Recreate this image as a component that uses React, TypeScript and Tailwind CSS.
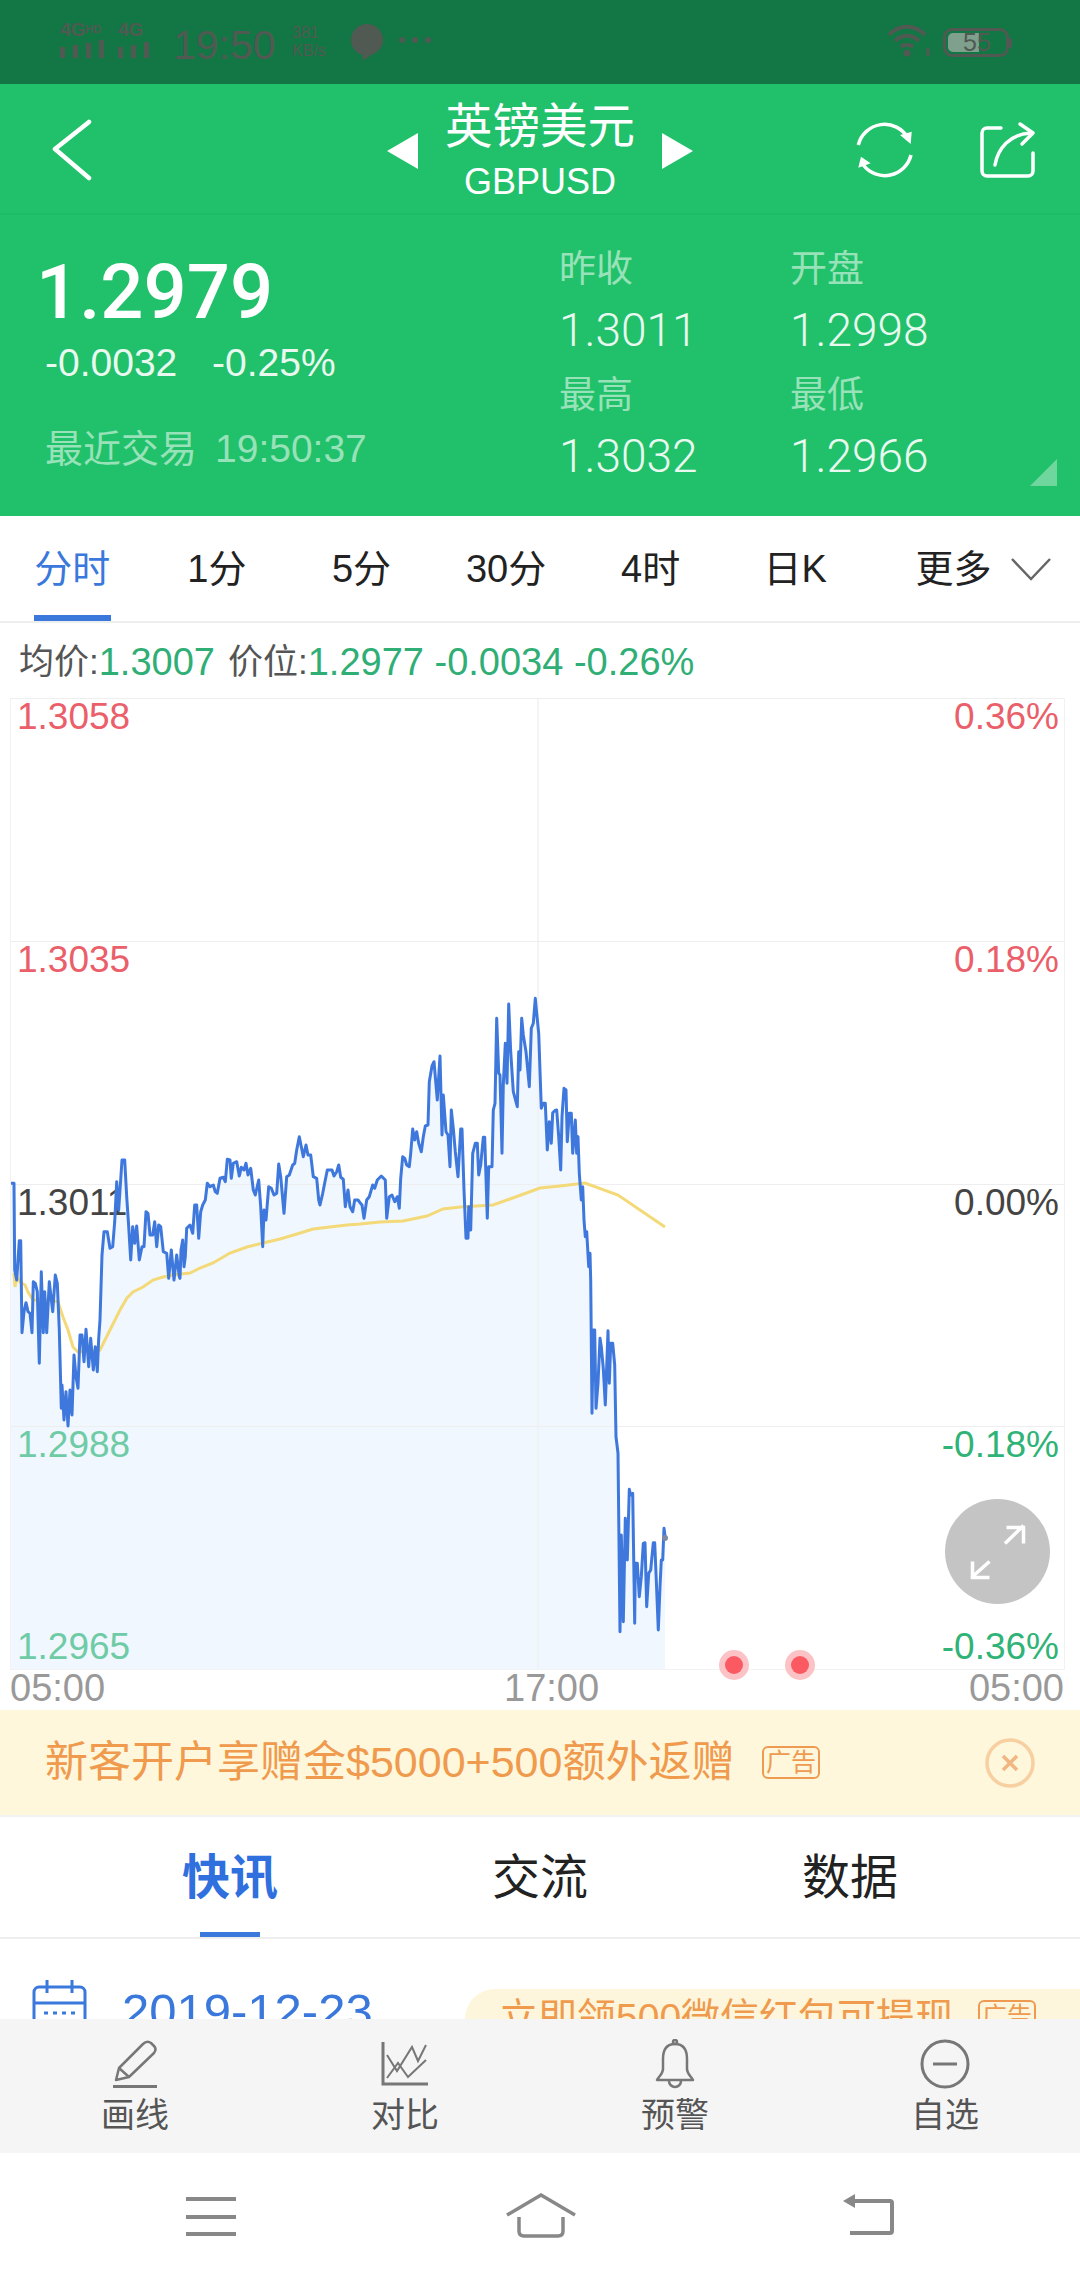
import React from 'react';

// chart traces, read off the reference in three pieces: [x, y] pairs
const seg1 = [33,190,42,190,44,450,50,480,58,362,62,362,66,638,72,575,78,548,84,575,90,580,96,638,100,485,106,490,112,515,118,730,124,455,130,638,134,515,140,638,148,485,158,575,166,465,172,490,178,630,184,865,186,795,192,900,198,815,204,918,210,810,216,885,222,705,228,770,234,805,240,645,246,645,252,725,258,628,266,740,272,655,280,750,286,680,292,755,296,655,300,600,306,405,312,335,322,335,330,385,338,380,344,305,350,185,356,270,366,120,374,120,380,230,386,320,392,420,398,320,404,370,410,318,418,420,426,380,432,380,438,275,444,280,450,345,458,345,464,305,470,380,476,315,482,320,490,395,500,400,506,475,514,390,522,480,530,405,538,470];
const seg2 = [0,565,3,480,8,450,12,530,16,500,20,415,30,405,38,430,44,345,50,345,56,445,62,365,68,345,76,330,82,280,90,290,100,285,106,305,112,310,120,265,130,262,136,275,142,208,150,210,154,265,160,220,170,215,178,258,184,232,192,240,198,220,204,255,212,235,220,300,226,315,236,270,242,350,248,470,252,360,258,390,266,290,274,295,282,315,290,310,296,222,302,260,312,370,320,260,328,255,338,225,344,220,350,180,358,140,364,170,370,200,378,165,384,195,392,195,400,260,410,265,416,330,420,345,428,310,436,270,442,240,456,240,462,258,470,245,476,225,482,262,490,268,496,350,504,300,510,350,518,365,524,330,534,330];
const seg3 = [0,668,6,675,12,715,20,660,28,650,38,615,44,625,52,600,64,588,76,600,80,715,88,650,96,645,104,665,112,650,118,685,122,595,128,530,134,535,140,555,148,560,152,520,158,447,164,480,170,455,176,490,184,515,190,470,196,438,204,435,208,305,216,258,222,245,232,360,240,228,246,465,250,345,258,455,264,465,270,560,274,390,280,445,286,515,294,590,302,447,306,447,312,630,318,775,324,775,326,680,332,750,338,520,346,490,352,490,356,585,362,555,370,472,374,472,382,715,386,560,396,560,400,390,405,370,410,115,416,280,420,285,426,520,430,315,436,190,441,310,446,72,452,215,460,335,472,380,476,215,480,270,485,115,490,165,498,215,508,320,514,145,520,130,526,55,530,100,536,160,544,385,550,370,556,370,562,510,568,425,574,490,578,398,584,392,590,390,596,470,602,570,606,410,612,325,618,330,622,485,628,400,634,400,638,520,646,420,650,520];
const seg4 = [48,60,54,50,58,160,64,240,68,200,72,300,76,350,80,335,86,440,90,400,92,480,96,880,100,630,104,630,108,865,114,790,120,655,124,680,130,745,136,855,144,632,148,790,152,670,158,670,164,735,168,950,174,1000,180,1535,184,1245,190,1505,196,1195,202,1320,208,1108,212,1125,218,1120,224,1510,226,1330,232,1330,238,1430,244,1370,250,1270,255,1268,260,1460,266,1360,272,1350,280,1268,284,1268,288,1360,295,1530,300,1400,304,1320,308,1320,312,1225,316,1255];

const toPoints = (pts: number[], ox: number, oy: number) => {
  const out: string[] = [];
  for (let i = 0; i < pts.length; i += 2) {
    out.push(`${(ox + pts[i] / 3).toFixed(1)},${(oy + pts[i + 1] / 3).toFixed(1)}`);
  }
  return out.join(' ');
};

const priceLine = [toPoints(seg1, 0, 1120), toPoints(seg2, 180, 1090), toPoints(seg3, 360, 980), toPoints(seg4, 560, 1120)].join(' ');
const areaShape = `11,1669 ${priceLine} 665,1669`;
const avgLine = '14,1273 15,1287 17,1277 20,1282 25,1285 28,1292 33,1300 50,1300 58,1302 63,1317 68,1330 73,1347 78,1352 100,1350 110,1330 120,1310 127,1298 133,1292 143,1287 153,1280 163,1277 173,1275 190,1273 200,1268 213,1263 230,1253 247,1247 263,1243 280,1239 297,1234 313,1229 330,1227 347,1225 360,1224 380,1222 403,1221 427,1216 443,1209 460,1207 493,1205 510,1199 540,1188 560,1186 585,1183 618,1195 665,1227';

const periods = [
  { label: '分时', active: true },
  { label: '1分' },
  { label: '5分' },
  { label: '30分' },
  { label: '4时' },
  { label: '日K' },
];

const AdTag = ({ className }: { className: string }) => (
  <span className={`inline-flex items-center justify-center w-[58px] h-[33px] border-2 border-[#ee9a50] rounded-[6px] text-[#ee9a50] text-[25px] leading-none ${className}`}>广告</span>
);

const StatusBar = () => (
  <div className="h-[84px] bg-[#127645] flex items-start text-[#505a52] shrink-0">
    <div className="ml-[60px] mt-[21px] w-[58px]">
      <div className="h-[17px] text-[19px] leading-[17px] font-bold whitespace-nowrap">4G<span className="text-[11px] align-top">HD</span></div>
      <div className="flex items-end gap-[8px] h-[19px] mt-[1px]">
        <div className="w-[5px] h-[11px] bg-[#505a52]" />
        <div className="w-[5px] h-[13px] bg-[#505a52]" />
        <div className="w-[5px] h-[15px] bg-[#505a52]" />
        <div className="w-[5px] h-[18px] bg-[#505a52]" />
      </div>
    </div>
    <div className="mt-[21px] w-[50px]">
      <div className="h-[17px] text-[19px] leading-[17px] font-bold">4G</div>
      <div className="flex items-end gap-[8px] h-[19px] mt-[1px]">
        <div className="w-[5px] h-[11px] bg-[#505a52]" />
        <div className="w-[5px] h-[13px] bg-[#505a52]" />
        <div className="w-[5px] h-[16px] bg-[#505a52]" />
      </div>
    </div>
    <div className="ml-[5px] mt-[23px] text-[41px] leading-[44px] w-[119px]">19:50</div>
    <div className="mt-[24px] text-[16px] leading-[18px] w-[50px]">381<br />KB/s</div>
    <svg width="36" height="40" viewBox="0 0 36 40" className="mt-[22px] ml-[7px]">
      <path d="M18 2C9 2 2 9 2 18c0 8 6 14 12 15l-1 5c4-1 7-3 9-5 7-2 12-8 12-15C34 9 27 2 18 2z" fill="#505a52" />
    </svg>
    <div className="flex gap-[7px] mt-[37px] ml-[14px]">
      <div className="w-[6px] h-[6px] rounded-full bg-[#505a52]" />
      <div className="w-[6px] h-[6px] rounded-full bg-[#505a52]" />
      <div className="w-[6px] h-[6px] rounded-full bg-[#505a52]" />
    </div>
    <svg width="44" height="34" viewBox="0 0 44 34" className="ml-[456px] mt-[24px]" fill="none" stroke="#505a52" strokeWidth="4">
      <path d="M2 11C12 0 28 0 38 11" />
      <path d="M8 17C15 10 25 10 32 17" />
      <path d="M14 23C17 20 23 20 26 23" />
      <circle cx="20" cy="29" r="3.5" fill="#505a52" stroke="none" />
      <path d="M41 24v8" strokeWidth="3" />
    </svg>
    <div className="ml-[12px] mt-[28px] w-[66px] h-[29px] border-[3px] border-[#505a52] rounded-[9px] p-[2px] relative flex">
      <div className="w-[31px] h-full bg-[#7fa08c] rounded-l-[5px]" />
      <span className="absolute left-[17px] top-[-1px] text-[25px] leading-[25px]">55</span>
    </div>
    <div className="w-[3px] h-[10px] bg-[#505a52] mt-[38px] rounded-r-[2px]" />
  </div>
);

const Header = () => (
  <div className="h-[131px] bg-[#21c06a] border-b-2 border-[#1bbd64] flex items-start text-white shrink-0">
    <svg width="40" height="62" viewBox="0 0 40 62" fill="none" stroke="white" strokeWidth="4.5" strokeLinecap="round" strokeLinejoin="round" className="ml-[52px] mt-[35px]">
      <path d="M37 3L3 30L37 59" />
    </svg>
    <svg width="32" height="36" viewBox="0 0 32 36" fill="white" className="ml-[295px] mt-[49px]">
      <path d="M31 0V36L0 18z" />
    </svg>
    <div className="w-[242px] flex flex-col items-center">
      <div className="h-[62px] text-[47.5px] leading-[62px] mt-[12px] whitespace-nowrap">英镑美元</div>
      <div className="h-[40px] text-[36px] leading-[40px] mt-[4px]">GBPUSD</div>
    </div>
    <svg width="32" height="36" viewBox="0 0 32 36" fill="white" className="mt-[49px]">
      <path d="M1 0V36L32 18z" />
    </svg>
    <svg width="64" height="64" viewBox="0 0 64 64" fill="none" stroke="white" strokeWidth="3.5" className="ml-[160px] mt-[34px]">
      <path d="M5.3 27A27 27 0 0 1 55 20" />
      <path d="M47 17L58.700 13.700 57.700 26z" fill="white" stroke="none" />
      <path d="M58 37A27 27 0 0 1 10.300 47" />
      <path d="M5.300 49.700L8 38.700 17.700 45.300z" fill="white" stroke="none" />
    </svg>
    <svg width="60" height="60" viewBox="0 0 60 60" fill="none" stroke="white" strokeWidth="3.500" strokeLinecap="round" strokeLinejoin="round" className="ml-[61px] mt-[36px]">
      <path d="M23 8H9a5 5 0 0 0-5 5v38a5 5 0 0 0 5 5h41a5 5 0 0 0 5-5V33" />
      <path d="M17 45C20 28 32 14 53 13" />
      <path d="M42 4L55 13 44 24" />
    </svg>
  </div>
);

const QuoteStat = ({ label, value }: { label: string; value: string }) => (
  <div>
    <div className="h-[40px] text-[37px] leading-[40px] text-[#97e2b8]">{label}</div>
    <div className="h-[50px] mt-[15px] text-[46px] leading-[50px] text-[#e9f9f0] font-['Roboto'] font-light">{value}</div>
  </div>
);

const Quote = () => (
  <div className="h-[301px] bg-[#21c06a] relative flex items-start shrink-0">
    <div className="w-[559px] pl-[36px] pt-[42px]">
      <div className="h-[70px] text-[76px] leading-[70px] text-white font-['Roboto'] font-medium">1.2979</div>
      <div className="h-[40px] mt-[16px] ml-[9px] text-[39px] leading-[40px] text-[#e9f9f0] flex">
        <span className="w-[167px]">-0.0032</span>
        <span>-0.25%</span>
      </div>
      <div className="h-[40px] mt-[46px] ml-[9px] text-[38px] leading-[40px] text-[#97e2b8] flex whitespace-nowrap">
        <span className="w-[170px]">最近交易</span>
        <span className="text-[39px]">19:50:37</span>
      </div>
    </div>
    <div className="grid grid-cols-[231px_1fr] content-start gap-y-[21px] pt-[35px]">
      <QuoteStat label="昨收" value="1.3011" />
      <QuoteStat label="开盘" value="1.2998" />
      <QuoteStat label="最高" value="1.3032" />
      <QuoteStat label="最低" value="1.2966" />
    </div>
    <svg width="28" height="28" viewBox="0 0 28 28" className="absolute left-[1030px] top-[244px]">
      <path d="M27 0V27H0z" fill="#6fd69e" />
    </svg>
  </div>
);

const PeriodTabs = () => (
  <div className="h-[107px] flex items-start border-b-2 border-[#eeeeee] shrink-0 text-[38px] text-[#222222]">
    {periods.map((p) => (
      <div key={p.label} className="w-[144.600px] h-[105px] flex flex-col items-center">
        <div className={`h-[46px] mt-[30px] leading-[46px] ${p.active ? 'text-[#3a78dc]' : ''}`}>{p.label}</div>
        {p.active && <div className="w-[77px] h-[6px] mt-[23px] bg-[#3a78dc]" />}
      </div>
    ))}
    <div className="flex items-start ml-[48px] mt-[30px]">
      <span className="leading-[46px] whitespace-nowrap">更多</span>
      <svg width="42" height="24" viewBox="0 0 42 24" fill="none" stroke="#666666" strokeWidth="2.500" className="ml-[18px] mt-[11px]">
        <path d="M2 2L21 22L40 2" />
      </svg>
    </div>
  </div>
);

const InfoRow = () => (
  <div className="h-[75px] pl-[19px] pt-[4px] flex items-center text-[35px] shrink-0 whitespace-nowrap">
    <span className="text-[#555555]">均价:</span>
    <span className="text-[#2fae75] text-[38px]">1.3007</span>
    <span className="text-[#555555] ml-[13px]">价位:</span>
    <span className="text-[#2fae75] text-[38px]">1.2977 -0.0034 -0.26%</span>
  </div>
);

const ChartLabels = ({ left, right, leftColor, rightColor }: { left: string; right: string; leftColor: string; rightColor: string }) => (
  <div className="flex justify-between h-[36px] leading-[36px] text-[37px]">
    <span className={leftColor}>{left}</span>
    <span className={rightColor}>{right}</span>
  </div>
);

const Chart = () => (
  <div className="relative h-[1012px] shrink-0">
    <svg width="1080" height="1012" viewBox="0 698 1080 1012" className="absolute left-0 top-0">
      <polygon points={areaShape} fill="#f0f7fe" />
      <path d="M538 698V1669" stroke="#f0f0f0" strokeWidth="1.500" />
    </svg>
    <div className="relative ml-[10px] w-[1055px] h-[972px] grid grid-rows-4 border-x border-b border-[#f2f2f2]">
      <div className="border-t border-[#eeeeee] pl-[6px] pr-[5px]">
        <ChartLabels left="1.3058" right="0.36%" leftColor="text-[#ea5f6a]" rightColor="text-[#ea5f6a]" />
      </div>
      <div className="border-t border-[#eeeeee] pl-[6px] pr-[5px]">
        <ChartLabels left="1.3035" right="0.18%" leftColor="text-[#ea5f6a]" rightColor="text-[#ea5f6a]" />
      </div>
      <div className="border-t border-[#eeeeee] pl-[6px] pr-[5px]">
        <ChartLabels left="1.3011" right="0.00%" leftColor="text-[#444444]" rightColor="text-[#444444]" />
      </div>
      <div className="border-t border-[#eeeeee] pl-[6px] pr-[5px] flex flex-col justify-between pb-[4px]">
        <ChartLabels left="1.2988" right="-0.18%" leftColor="text-[#6fcba6]" rightColor="text-[#2fb377]" />
        <ChartLabels left="1.2965" right="-0.36%" leftColor="text-[#6fcba6]" rightColor="text-[#2fb377]" />
      </div>
    </div>
    <div className="flex pl-[10px] pr-[16px] h-[36px] leading-[36px] text-[38px] text-[#999999]">
      <span className="w-[494px]">05:00</span>
      <span>17:00</span>
      <span className="ml-auto">05:00</span>
    </div>
    <svg width="1080" height="1012" viewBox="0 698 1080 1012" className="absolute left-0 top-0 pointer-events-none">
      <polyline points={avgLine} fill="none" stroke="#f3d977" strokeWidth="3" />
      <polyline points={priceLine} fill="none" stroke="#3f78dc" strokeWidth="3" strokeLinejoin="round" />
      <circle cx="665" cy="1538" r="3" fill="#7d8aa0" />
    </svg>
    <div className="absolute left-[719px] top-[952px] w-[30px] h-[30px] rounded-full bg-[#fcc3c6] flex items-center justify-center">
      <div className="w-[18px] h-[18px] rounded-full bg-[#fb5a63]" />
    </div>
    <div className="absolute left-[785px] top-[952px] w-[30px] h-[30px] rounded-full bg-[#fcc3c6] flex items-center justify-center">
      <div className="w-[18px] h-[18px] rounded-full bg-[#fb5a63]" />
    </div>
    <div className="absolute left-[945px] top-[801px] w-[105px] h-[105px] rounded-full bg-[#c4c4c4]">
      <svg width="105" height="105" viewBox="0 0 105 105" fill="none" stroke="white" strokeWidth="3.500">
        <path d="M78.500 26.500L60 44.500M61.500 28.500H78.500V44.500" />
        <path d="M26.500 78.500L44.500 62.500M27.500 62.500V78.500H44.500" />
      </svg>
    </div>
  </div>
);

const Banner = () => (
  <div className="h-[107px] bg-[#fef7dc] border-b-2 border-[#f3f3f3] flex items-center pl-[45px] shrink-0 text-[#ef9a4d] text-[43px] whitespace-nowrap">
    <span className="w-[717px]">新客开户享赠金$5000+500额外返赠</span>
    <AdTag className="" />
    <svg width="50" height="50" viewBox="0 0 50 50" fill="none" stroke="#f7cfa0" strokeWidth="3.500" className="ml-[165px]">
      <circle cx="25" cy="25" r="23" />
      <path d="M18 18L32 32M32 18L18 32" stroke="#f2b680" />
    </svg>
  </div>
);

const NewsTabs = () => (
  <div className="h-[122px] border-b-2 border-[#eeeeee] flex pl-[75px] shrink-0 text-[48px] text-[#222222]">
    <div className="w-[310px] flex flex-col items-center">
      <div className="mt-[30px] h-[62px] leading-[62px] font-bold text-[#2f6fde]">快讯</div>
      <div className="w-[60px] h-[5px] mt-[23px] bg-[#3a78dc]" />
    </div>
    <div className="w-[310px] flex justify-center"><div className="mt-[30px] h-[62px] leading-[62px]">交流</div></div>
    <div className="w-[310px] flex justify-center"><div className="mt-[30px] h-[62px] leading-[62px]">数据</div></div>
  </div>
);

const Feed = () => (
  <div className="h-[80px] overflow-hidden flex items-start shrink-0">
    <svg width="56" height="70" viewBox="0 0 56 70" fill="none" stroke="#3a78dc" strokeWidth="3" className="ml-[32px] mt-[40px]">
      <rect x="2" y="8" width="51" height="55" rx="5" />
      <path d="M2 24H53M15 1V14M40 1V14" />
      <path d="M12 34H44M12 43H44" strokeDasharray="4 5" />
    </svg>
    <div className="ml-[34px] mt-[42px] w-[246px] h-[60px] text-[49px] leading-[60px] text-[#3a78dc] whitespace-nowrap">2019-12-23</div>
    <div className="ml-[97px] mt-[50px] flex-1 h-[80px] bg-[#fdf6dc] rounded-tl-[30px] flex items-start text-[39px] text-[#ef9a4d] whitespace-nowrap pl-[34px]">
      <span className="mt-[6px] leading-[46px] w-[479px]">立即领500微信红包可提现</span>
      <AdTag className="mt-[11px]" />
    </div>
  </div>
);

const ToolItem = ({ label, children }: { label: string; children: React.ReactNode }) => (
  <div className="flex flex-col items-center">
    <div className="h-[50px] mt-[20px] flex items-center justify-center">{children}</div>
    <div className="h-[40px] mt-[6px] text-[34px] leading-[40px] text-[#555555]">{label}</div>
  </div>
);

const Toolbar = () => (
  <div className="h-[134px] bg-[#f5f5f5] grid grid-cols-4 shrink-0">
    <ToolItem label="画线">
      <svg width="50" height="50" viewBox="0 0 50 50" fill="none" stroke="#777777" strokeWidth="2.500" strokeLinejoin="round">
        <path d="M6 41L9 29L33 5Q37 1 41 4L44 7Q47 10 44 14L19 38z" />
        <path d="M9 29L19 38" />
        <path d="M3 47.500H47" strokeWidth="3" />
      </svg>
    </ToolItem>
    <ToolItem label="对比">
      <svg width="50" height="46" viewBox="0 0 50 46" fill="none" stroke="#777777" strokeWidth="2">
        <path d="M3 1V43H48" strokeWidth="3" />
        <path d="M7 14L17 30L32 6L38 20L46 4" />
        <path d="M7 37L18 22L28 36L46 19" />
      </svg>
    </ToolItem>
    <ToolItem label="预警">
      <svg width="44" height="50" viewBox="0 0 44 50" fill="none" stroke="#777777" strokeWidth="2.500" strokeLinejoin="round">
        <circle cx="22" cy="3" r="2" />
        <path d="M22 5C13 5 10 12 10 20V30C10 35 6 37 4 41H40C38 37 34 35 34 30V20C34 12 31 5 22 5z" />
        <path d="M16 42a6 6 0 0 0 12 0" />
      </svg>
    </ToolItem>
    <ToolItem label="自选">
      <svg width="50" height="50" viewBox="0 0 50 50" fill="none" stroke="#777777" strokeWidth="3">
        <circle cx="25" cy="25" r="23" />
        <path d="M13 25H37" />
      </svg>
    </ToolItem>
  </div>
);

const NavBar = () => (
  <div className="h-[127px] bg-white flex items-start shrink-0">
    <div className="ml-[186px] mt-[44px] w-[50px] h-[39px] flex flex-col justify-between">
      <div className="h-[4px] bg-[#888888]" />
      <div className="h-[4px] bg-[#888888]" />
      <div className="h-[4px] bg-[#888888]" />
    </div>
    <svg width="72" height="46" viewBox="0 0 72 46" fill="none" stroke="#888888" strokeWidth="3.500" className="ml-[269px] mt-[40px]">
      <path d="M2 22L36 2L70 22" />
      <path d="M14 24V38Q14 43 19 43H53Q58 43 58 38V24" />
    </svg>
    <svg width="52" height="44" viewBox="0 0 52 44" fill="none" stroke="#888888" strokeWidth="4" className="ml-[266px] mt-[41px]">
      <path d="M0 7L12 0V14z" fill="#888888" stroke="none" />
      <path d="M12 7H47Q49 7 49 9V37Q49 39 47 39H7" />
    </svg>
  </div>
);

export default function App() {
  return (
    <div className="w-[1080px] h-[2280px] overflow-hidden bg-white flex flex-col font-['Liberation_Sans','Noto_Sans_CJK_SC',sans-serif]">
      <StatusBar />
      <Header />
      <Quote />
      <PeriodTabs />
      <InfoRow />
      <Chart />
      <Banner />
      <NewsTabs />
      <Feed />
      <Toolbar />
      <NavBar />
    </div>
  );
}
